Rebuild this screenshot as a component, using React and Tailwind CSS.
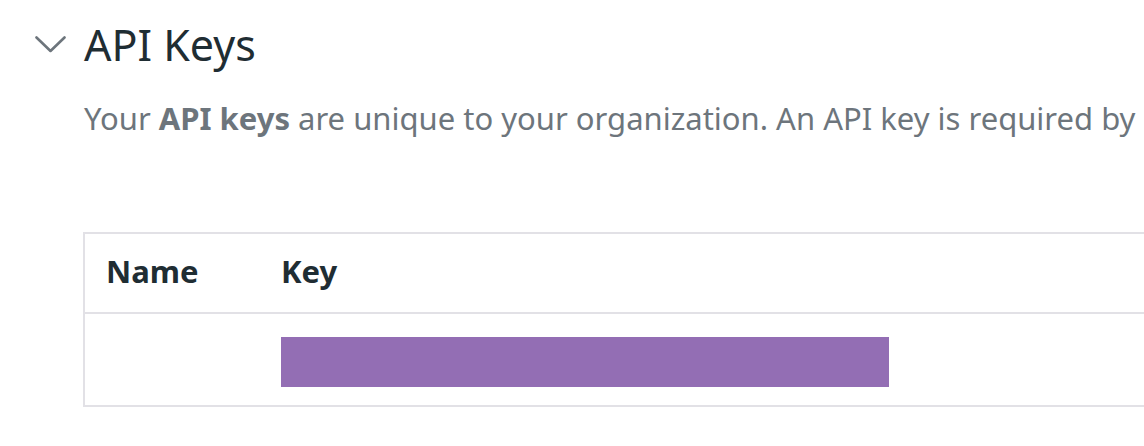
export default function App() {
  return (
    <div className="w-[1144px] h-[446px] bg-white overflow-hidden" style={{ fontFamily: '"Noto Sans", "Open Sans", sans-serif' }}>
      <div className="flex items-center h-[42px] mt-[23px]">
        <div className="w-[84px] flex items-center">
          <svg className="ml-[35px]" width="31" height="17" viewBox="0 0 31 17" fill="none">
            <path d="M1.5 1.5 L15.5 15 L29.5 1.5" stroke="#6d757c" strokeWidth="2.6" strokeLinecap="round" strokeLinejoin="round" />
          </svg>
        </div>
        <h1 className="text-[43px] leading-none text-[#1f2d33] whitespace-nowrap">API Keys</h1>
      </div>
      <p className="ml-[84px] mt-[38px] h-[31px] text-[31px] leading-none text-[#6d757c] whitespace-nowrap">
        Your <span className="font-bold">API keys</span> are unique to your organization. An API key is required by
      </p>
      <div className="ml-[83px] mt-[98px] w-[1200px] border-2 border-[#e2e1e6]">
        <div className="flex h-[80px] items-center pb-[4px] border-b-2 border-[#e2e1e6] text-[31px] font-bold text-[#1f2d33]">
          <div className="w-[196px] pl-[21px]">Name</div>
          <div>Key</div>
        </div>
        <div className="flex h-[91px] items-start pt-[23px]">
          <div className="w-[196px]" />
          <div className="w-[608px] h-[50px] bg-[#936eb4]" />
        </div>
      </div>
    </div>
  );
}
